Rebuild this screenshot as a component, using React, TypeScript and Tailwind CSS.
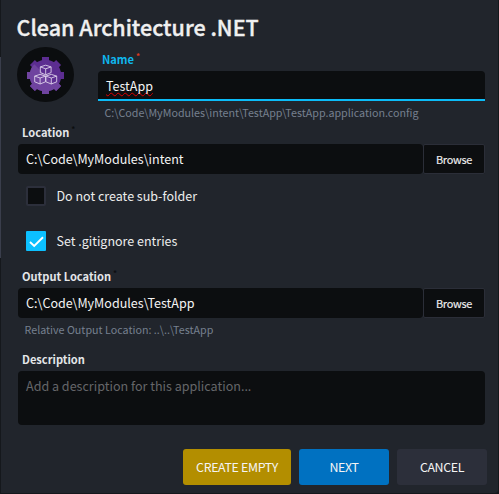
import React from "react";

function Label({ text, mark, active }: { text: string; mark?: string; active?: boolean }) {
  return (
    <div className={`flex h-5 text-[11.1px] leading-[21px] font-bold ${active ? "text-[#0fb7ee]" : "text-[#e4e6e8]"}`}>
      <span>{text}</span>
      {mark && <span className={`ml-[2px] mt-[-2px] text-[8px] leading-[18px] ${mark}`}>*</span>}
    </div>
  );
}

function PathField({ value }: { value: string }) {
  return (
    <div className="flex h-[30px]">
      <div className="w-[405px] rounded-[4px] bg-[#0c0e10] pl-2 text-[12.55px] leading-[30px] text-[#f4f4f4]">{value}</div>
      <button className="h-[30px] w-[62px] rounded-[2px] border border-[#2b2e38] bg-[#0c0e10] text-[10.9px] leading-[27px] tracking-[-0.25px] text-[#f0f0f0] [-webkit-text-stroke:0.15px_#f0f0f0]">
        Browse
      </button>
    </div>
  );
}

function CheckRow({ text, checked }: { text: string; checked?: boolean }) {
  return (
    <div className="ml-2 flex h-5 items-center">
      <span className={`flex size-5 items-center justify-center ${checked ? "rounded-[1px] bg-[#0cc0ff]" : "rounded-[2px] border-2 border-[#2c2f3b] bg-[#0c0e10]"}`}>
        {checked && (
          <svg width="20" height="20" viewBox="0 0 20 20" fill="none" stroke="#fff" strokeWidth="1.9">
            <path d="M4 11l4.2 4L17 6.3" />
          </svg>
        )}
      </span>
      <span className="ml-[10.5px] text-[12.5px] leading-5 text-[#eceded]">{text}</span>
    </div>
  );
}

function Cube({ x, y }: { x: number; y: number }) {
  return (
    <path transform={`translate(${x} ${y})`} d="M0-4.6L5.4-2.9V2.8L0 5L-5.4 2.8V-2.9ZM-5.4-2.9L0-1L5.4-2.9M0-1V5" />
  );
}

function AppIcon() {
  return (
    <svg className="mt-1 h-[55px] w-[57px] shrink-0" viewBox="0 0 57 55">
      <ellipse cx="28.5" cy="27.5" rx="28.5" ry="27.5" fill="#0b0d0f" />
      <g fill="#5c2d91">
        <circle cx="28.5" cy="28.5" r="15.8" />
        {[0, 45, 90, 135].map((a) => (
          <rect key={a} x="25" y="10" width="7" height="37" transform={`rotate(${a} 28.5 28.5)`} />
        ))}
      </g>
      <g fill="#6f439f">
        <path d="M17.3 17.3A15.8 15.8 0 0 0 39.7 39.7Z" />
        <path d="M10 25h7v7h-7zM25 40h7v7h-7zM12.9 39.1l5-5 5 5-5 5zM34.1 39.1l5-5 5 5-5 5z" />
      </g>
      <g fill="none" stroke="#ddd0ea" strokeWidth="0.9" strokeLinejoin="round">
        <Cube x={28.7} y={22.8} />
        <Cube x={23.1} y={32} />
        <Cube x={34.3} y={32} />
      </g>
    </svg>
  );
}

export default function App() {
  return (
    <div className="flex h-[494px] w-[499px] overflow-hidden bg-[#15181c] font-['Noto_Sans_CJK_SC',sans-serif]">
      <div className="w-px pt-[57px]">
        <div className="h-[201px] bg-[#3a3e4c]" />
      </div>
      <main className="h-[493px] w-[497px] rounded-br-[3px] bg-[#21252c] pl-[17px] pt-[11px]">
        <h1 className="-ml-[1.5px] h-8 whitespace-nowrap text-[21.5px] leading-8 font-medium text-[#f0f0f0] [-webkit-text-stroke:0.35px_#f0f0f0]">Clean Architecture .NET</h1>

        <section className="-ml-px flex h-[79px]">
          <AppIcon />
          <div className="ml-6 w-[387px] pt-[6px]">
            <div className="ml-1"><Label text="Name" mark="text-[#e03a1c]" active /></div>
            <div className="mt-[2px] h-[30px] rounded-t-[4px] border-b-2 border-[#0cbcf8] bg-[#0c0e10] pl-2 text-[12.5px] leading-[30px] text-[#f4f4f4]">
              <span className="underline decoration-[#e00000] decoration-wavy decoration-1 underline-offset-[1px] [text-decoration-skip-ink:none]">TestApp</span>
            </div>
            <p className="ml-[6.5px] mt-px h-5 whitespace-nowrap text-[10.72px] leading-[22px] text-[#76808f]">
              C:\Code\MyModules\intent\TestApp\TestApp.application.config
            </p>
          </div>
        </section>

        <section className="h-[144px]">
          <div className="mb-[2px] ml-1"><Label text="Location" mark="text-[#0c0e10]" /></div>
          <PathField value="C:\Code\MyModules\intent" />
          <div className="mt-3 flex flex-col gap-[25px]">
            <CheckRow text="Do not create sub-folder" />
            <CheckRow text="Set .gitignore entries" checked />
          </div>
        </section>

        <section className="h-[83px]">
          <div className="mb-[2px] ml-1"><Label text="Output Location" mark="text-[#0c0e10]" /></div>
          <PathField value="C:\Code\MyModules\TestApp" />
          <p className="ml-[6.5px] mt-px text-[10.72px] leading-[22px] text-[#76808f]">Relative Output Location: ..\..\TestApp</p>
        </section>

        <section>
          <div className="mb-[2px] ml-1"><Label text="Description" /></div>
          <div className="h-[54px] w-[467px] rounded-[4px] bg-[#0c0e10] pl-2 pt-[5px] text-[12.55px] leading-5 text-[#656669]">
            Add a description for this application...
          </div>
        </section>

        <footer className="ml-[165px] mt-6 flex gap-2 text-[12.4px] leading-[35px] tracking-[-0.35px] text-[#f4f4f4]">
          <button className="h-9 w-[108px] rounded-[3px] bg-[#b38e00]">CREATE EMPTY</button>
          <button className="h-9 w-[90px] rounded-[3px] bg-[#0071c1]">NEXT</button>
          <button className="h-9 w-[90px] rounded-[3px] bg-[#2c2f3a]">CANCEL</button>
        </footer>
      </main>
    </div>
  );
}
